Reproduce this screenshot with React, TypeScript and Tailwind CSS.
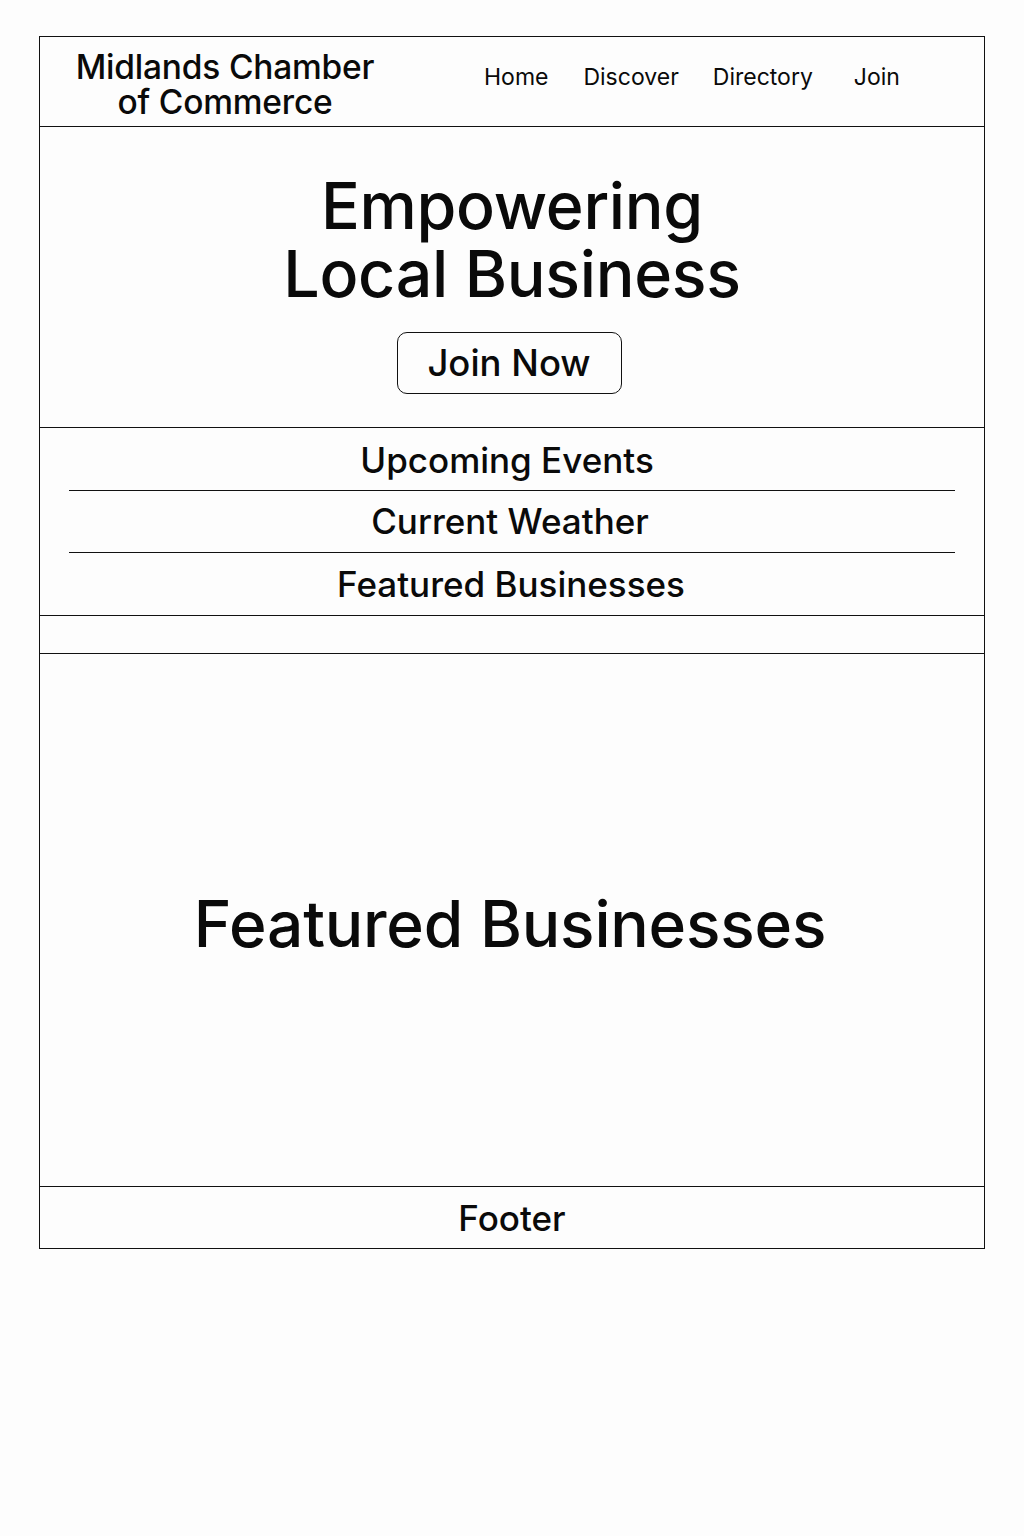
import React from "react";

export default function App() {
  return (
    <div className="min-h-[1536px] w-[1024px] bg-[#fdfdfd] pt-[36px] pl-[39px] text-[#0a0a0a]" style={{ fontFamily: "Inter, 'Noto Sans', sans-serif" }}>
      <div className="w-[946px] border border-[#111]">
        {/* Header */}
        <header className="flex h-[90px] items-center border-b border-[#111]">
          <div className="w-[370px] pt-[6px] text-center text-[33.5px] font-medium leading-[35px] tracking-[-0.2px]">
            Midlands Chamber
            <br />
            of Commerce
          </div>
          <nav className="ml-[74px] flex items-center pb-[8px] text-[23px] leading-none">
            <span>Home</span>
            <span className="ml-[35px]">Discover</span>
            <span className="ml-[34px]">Directory</span>
            <span className="ml-[41px]">Join</span>
          </nav>
        </header>

        {/* Hero */}
        <section className="flex h-[301px] flex-col items-center border-b border-[#111]">
          <h1 className="mt-[45px] text-center text-[64.5px] font-medium leading-[68px] tracking-[-0.3px]">
            Empowering
            <br />
            Local Business
          </h1>
          <button className="mt-[24px] mr-[6px] flex h-[62px] w-[225px] items-center justify-center rounded-[10px] border border-[#111] bg-transparent text-[36.5px] font-medium leading-none">
            Join Now
          </button>
        </section>

        {/* List */}
        <section className="border-b border-[#111] px-[29px]">
          <div className="flex h-[63px] items-center justify-center border-b border-[#111] pt-[2px] pr-[10px] text-[35px] font-medium">
            Upcoming Events
          </div>
          <div className="flex h-[62px] items-center justify-center border-b border-[#111] pr-[4px] text-[35px] font-medium">
            Current Weather
          </div>
          <div className="flex h-[62px] items-center justify-center pr-[2px] text-[35px] font-medium">
            Featured Businesses
          </div>
        </section>

        <div className="h-[38px] border-b border-[#111]" />

        {/* Featured */}
        <section className="flex h-[533px] items-center justify-center border-b border-[#111] pt-[7px] pr-[4px]">
          <h2 className="text-[64px] font-medium leading-none tracking-[-0.2px]">Featured Businesses</h2>
        </section>

        {/* Footer */}
        <footer className="flex h-[61px] items-center justify-center pt-[1px] text-[35px] font-medium">
          Footer
        </footer>
      </div>
    </div>
  );
}
